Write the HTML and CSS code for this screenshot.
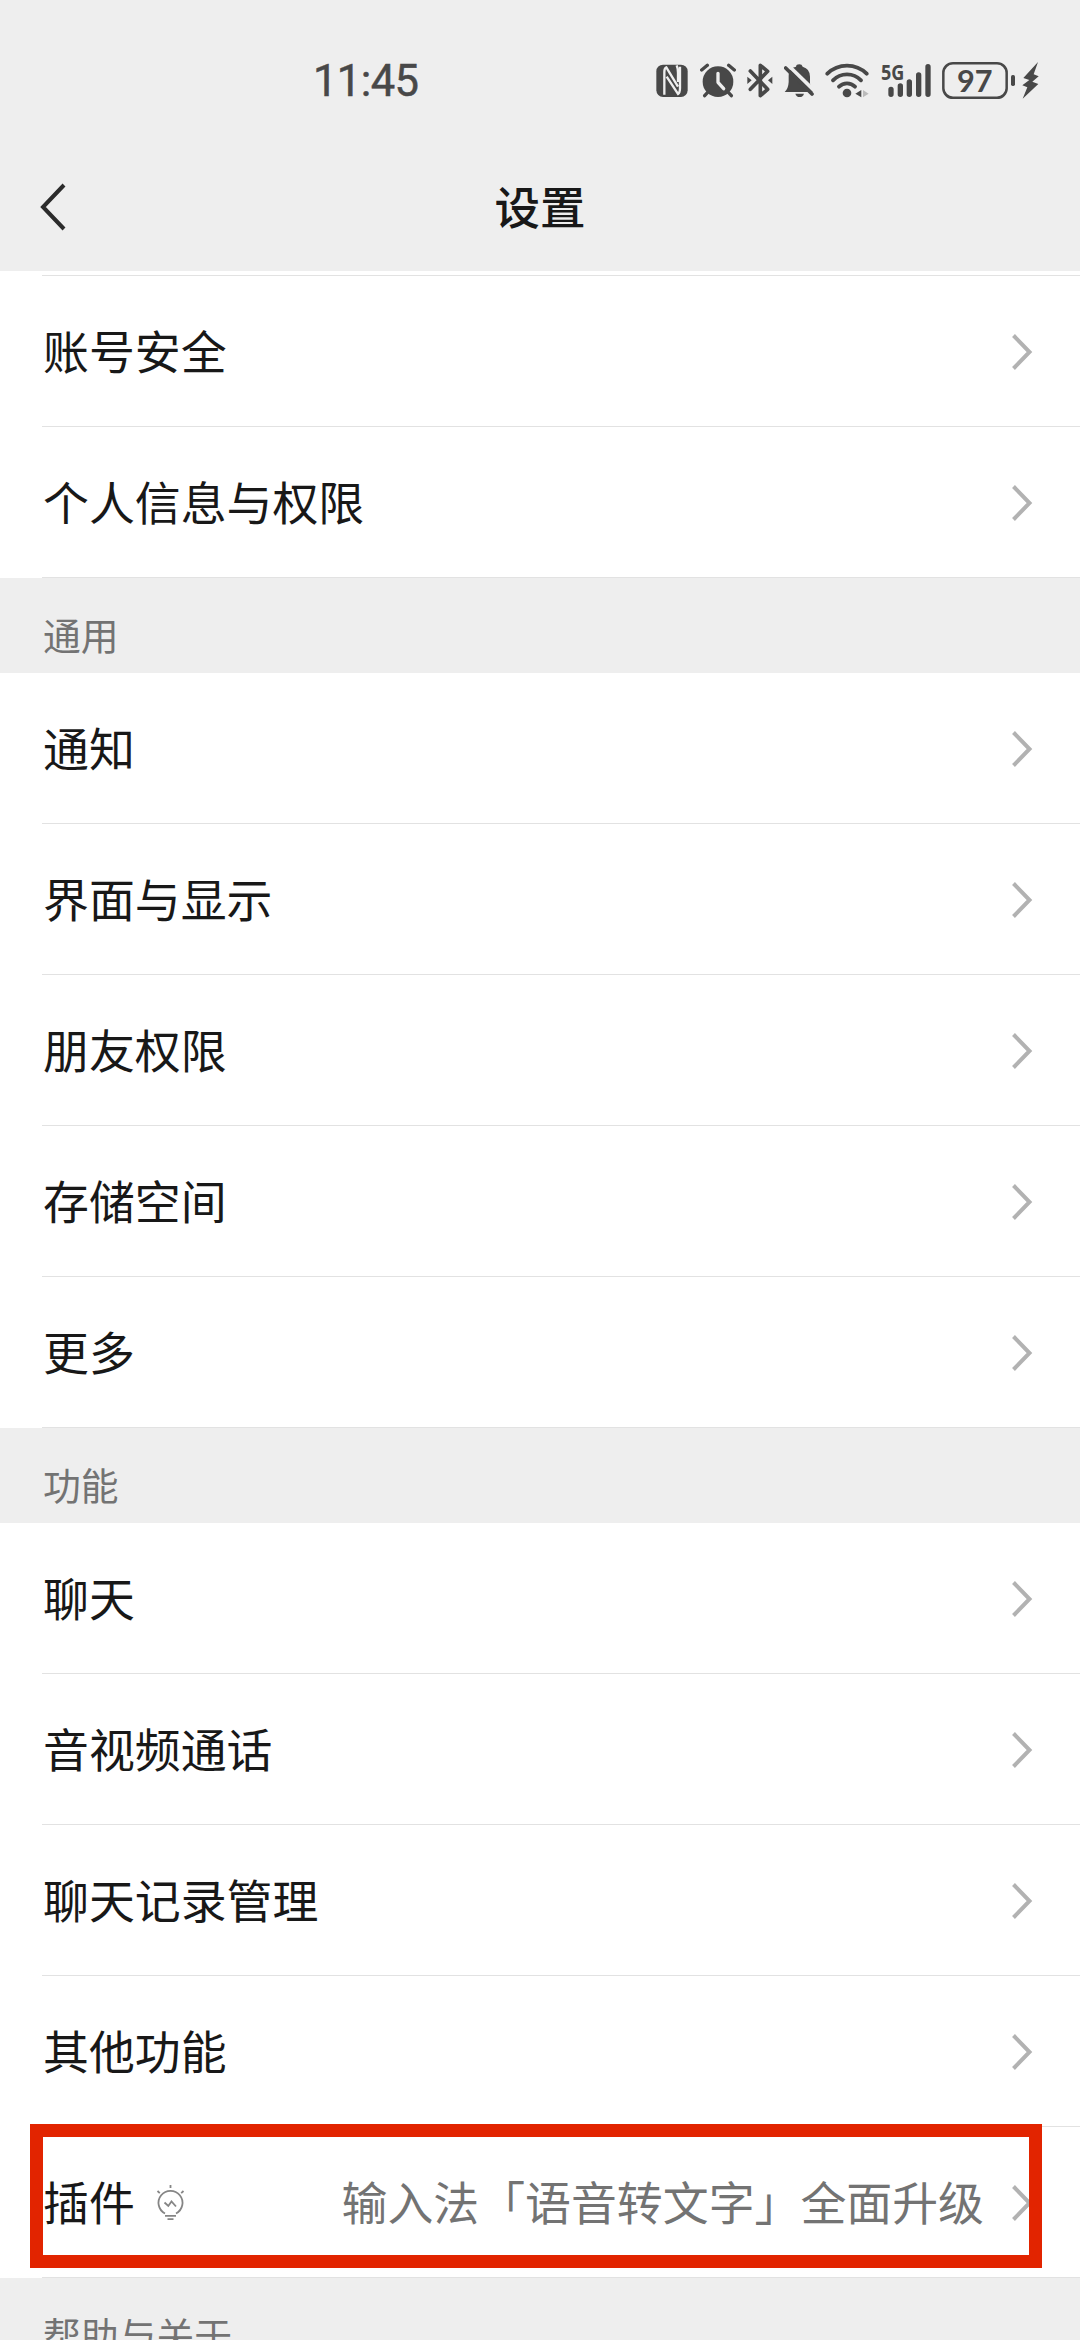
FILE: index.html
```html
<!DOCTYPE html>
<html lang="zh-CN">
<head>
    <meta charset="UTF-8">
    <title>设置</title>
    <meta name="viewport" content="width=device-width, initial-scale=1.0">
    <link rel="stylesheet" href="styles.css">
</head>
<body>
    <svg class="defs" width="0" height="0">
        <symbol id="arrow" viewBox="0 0 22 38">
            <path d="M2.5 2.5 L18.5 19 L2.5 35.5" fill="none" stroke="#b2b2b2" stroke-width="4"/>
        </symbol>
    </svg>

    <header class="top">
        <div class="status-bar">
            <span class="time">11:45</span>
            <div class="status-icons">
                <!-- NFC -->
                <svg width="32" height="40" viewBox="0 0 96 120">
                    <rect x="1" y="14" width="94" height="97" rx="20" fill="#484848"/>
                    <path d="M25 104 V36 Q25 24 31 22 L66 80 M66 66 V38 Q66 26 62 16 M32 50 L66 102 Q72 98 72 84 V20" fill="none" stroke="#eee" stroke-width="7"/>
                </svg>
                <!-- 闹钟 -->
                <svg width="36" height="40" viewBox="0 0 108 120">
                    <circle cx="54" cy="65" r="46" fill="#484848"/>
                    <path d="M5 30 L22 16 M86 16 L103 30 M23 97 L14 107 M85 97 L94 107" stroke="#484848" stroke-width="10" stroke-linecap="round"/>
                    <path d="M54 40 V67 L71 86" fill="none" stroke="#eee" stroke-width="10" stroke-linecap="round" stroke-linejoin="round"/>
                </svg>
                <!-- 蓝牙 -->
                <svg width="26" height="40" viewBox="0 0 78 120">
                    <path d="M10 33 L62 88 L40 107 V16 L62 34 L10 88" fill="none" stroke="#484848" stroke-width="11" stroke-linecap="round" stroke-linejoin="round"/>
                    <path d="M1 50 L14 61 L1 72 Z M76 50 L63 61 L76 72 Z" fill="#484848"/>
                </svg>
                <!-- 静音 -->
                <svg width="30" height="40" viewBox="0 0 90 120">
                    <path d="M2 96 Q13 86 14 66 V48 Q14 24 36 20 Q37 13 46 13 Q54 13 56 20 Q78 26 78 50 V70 Q80 88 88 96 Z" fill="#484848"/>
                    <path d="M34 101 H60 Q57 111 47 111 Q37 111 34 101 Z" fill="#484848"/>
                    <path d="M12 15 L94 95" stroke="#eee" stroke-width="11"/>
                    <path d="M5 24 L84 102" stroke="#484848" stroke-width="11" stroke-linecap="round"/>
                </svg>
                <!-- WiFi -->
                <svg width="44" height="40" viewBox="0 0 132 120">
                    <g fill="none" stroke="#484848" stroke-width="11.500" stroke-linecap="round">
                        <path d="M7 41 A84 84 0 0 1 125 41"/>
                        <path d="M24 61 A58 58 0 0 1 108 61"/>
                        <path d="M42 80 A34 34 0 0 1 90 80"/>
                    </g>
                    <circle cx="66" cy="99" r="13" fill="#484848"/>
                    <path d="M109 90 V112 L91 101 Z" fill="#484848"/>
                    <path d="M114 90 V112 L131 101 Z" fill="#bbb"/>
                </svg>
                <!-- 5G 信号 -->
                <svg class="signal" width="50" height="40" viewBox="0 0 150 120">
                    <text class="net" x="0" y="60" textLength="70" lengthAdjust="spacingAndGlyphs">5G</text>
                    <path d="M30 88 V103 M58 78 V103 M85 66 V103 M113 45 V103 M141 20 V103" stroke="#484848" stroke-width="16" stroke-linecap="round"/>
                </svg>
                <!-- 电量 -->
                <svg width="97" height="40" viewBox="0 0 291 120">
                    <rect x="4" y="9.500" width="190" height="104" rx="29" fill="none" stroke="#484848" stroke-width="7.500"/>
                    <text class="battery" x="98" y="95" text-anchor="middle">97</text>
                    <rect x="207" y="45" width="12" height="33" rx="5" fill="#484848"/>
                    <path d="M288 6 L244 54 L262 60 L241 76 L256 82 L242 116 L289 72 L271 65 L290 49 L275 43 Z" fill="#484848"/>
                </svg>
            </div>
        </div>
        <div class="nav-bar">
            <svg class="back" width="28" height="50" viewBox="0 0 28 50">
                <path d="M25 3 L4 25 L25 47" fill="none" stroke="#2b2b2b" stroke-width="4"/>
            </svg>
            <h1>设置</h1>
        </div>
    </header>

    <main>
        <ul class="list first">
            <li><span>账号安全</span><svg class="arrow"><use href="#arrow"/></svg></li>
            <li><span>个人信息与权限</span><svg class="arrow"><use href="#arrow"/></svg></li>
        </ul>

        <h2>通用</h2>
        <ul class="list">
            <li><span>通知</span><svg class="arrow"><use href="#arrow"/></svg></li>
            <li><span>界面与显示</span><svg class="arrow"><use href="#arrow"/></svg></li>
            <li><span>朋友权限</span><svg class="arrow"><use href="#arrow"/></svg></li>
            <li><span>存储空间</span><svg class="arrow"><use href="#arrow"/></svg></li>
            <li><span>更多</span><svg class="arrow"><use href="#arrow"/></svg></li>
        </ul>

        <h2>功能</h2>
        <ul class="list">
            <li><span>聊天</span><svg class="arrow"><use href="#arrow"/></svg></li>
            <li><span>音视频通话</span><svg class="arrow"><use href="#arrow"/></svg></li>
            <li><span>聊天记录管理</span><svg class="arrow"><use href="#arrow"/></svg></li>
            <li><span>其他功能</span><svg class="arrow"><use href="#arrow"/></svg></li>
            <li class="plugin">
                <span>插件</span>
                <svg class="bulb" width="30" height="36" viewBox="0 0 30 36">
                    <g fill="none" stroke="#858585" stroke-width="1.800">
                        <path d="M9 28.500 A12 12 0 1 1 20 28.500"/>
                        <path d="M8.500 17.500 L12.300 21 L15.500 16.500 L20 21.500"/>
                        <path d="M14.500 0 V3 M1.500 6 L3.800 8.200 M27.500 6 L25.200 8.200"/>
                        <path d="M9 30.800 H20 M11.500 34.200 H17.500"/>
                    </g>
                </svg>
                <span class="value">输入法「语音转文字」全面升级</span>
                <svg class="arrow"><use href="#arrow"/></svg>
                <div class="highlight"></div>
            </li>
        </ul>

        <h2>帮助与关于</h2>
    </main>
</body>
</html>
```

FILE: styles.css
```css
* {
    box-sizing: border-box;
}
body {
    margin: 0;
    height: 2340px;
    overflow: hidden;
    background-color: #eee;
    color: #181818;
    font-family: "Noto Sans CJK SC", sans-serif;
}
.defs {
    display: block;
}
.top {
    height: 271px;
    background-color: #eee;
}
.status-bar {
    height: 160px;
    padding: 0 41px 0 313px;
    display: flex;
    justify-content: space-between;
    align-items: center;
}
.time {
    font-family: Roboto, sans-serif;
    font-size: 43.5px;
    font-weight: 400;
    -webkit-text-stroke: 0.5px #484848;
    letter-spacing: -0.6px;
    color: #484848;
    padding-top: 3px;
}
.status-icons {
    display: flex;
    gap: 11.3px;
}
.signal {
    overflow: visible;
}
.net {
    font: bold 64px "Open Sans", sans-serif;
    fill: #484848;
}
.battery {
    font: bold 92px Lato, sans-serif;
    fill: #484848;
}
.nav-bar {
    height: 94px;
    padding: 0 39px;
    display: grid;
    grid-template-columns: 1fr auto 1fr;
    align-items: center;
}
h1 {
    margin: 0;
    padding-bottom: 4px;
    font-size: 45.5px;
    line-height: 60px;
    font-weight: 500;
}
.list {
    list-style: none;
    margin: 0;
    padding: 0;
    background-color: #fff;
}
.list.first {
    padding-top: 4px;
}
.list.first::before {
    content: "";
    display: block;
    height: 1px;
    margin-left: 42px;
    background-color: #e2e2e2;
}
.list li {
    position: relative;
    height: 151px;
    padding: 0 47px 0 43px;
    display: flex;
    align-items: center;
    justify-content: space-between;
    font-size: 45.9px;
    line-height: 60px;
}
.list li span {
    padding-bottom: 6px;
}
/* 分隔线 */
.list li::after {
    content: "";
    position: absolute;
    left: 42px;
    right: 0;
    bottom: 0;
    height: 1px;
    background-color: #e2e2e2;
}
.arrow {
    width: 22px;
    height: 38px;
    flex: none;
}
h2 {
    margin: 0;
    height: 95px;
    padding: 28px 43px 0;
    font-size: 37.8px;
    line-height: 56px;
    font-weight: 400;
    color: #737373;
}
.bulb {
    margin-left: 21px;
}
.value {
    margin-left: auto;
    margin-right: 27px;
    color: #737373;
}
.highlight {
    position: absolute;
    left: 30px;
    right: 38px;
    top: -3px;
    height: 144px;
    border: 13px solid #e22400;
    z-index: 1;
}
```
